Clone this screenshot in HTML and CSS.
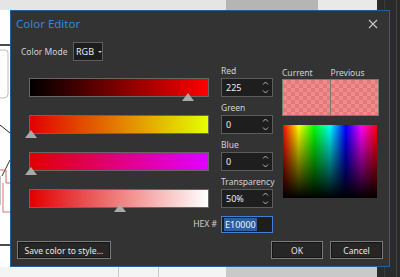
FILE: index.html
```html
<!DOCTYPE html>
<html lang="en">
<head>
    <meta charset="UTF-8">
    <title>Color Editor</title>
    <link rel="stylesheet" href="styles.css">
</head>
<body>

    <!-- Drawing behind the dialog -->
    <svg class="backdrop" width="400" height="277" viewBox="0 0 400 277">
        <rect x="0" y="0" width="400" height="277" fill="#f4f4f4"/>
        <rect x="0" y="0" width="226" height="10" fill="#e5e5e5"/>
        <rect x="226" y="0" width="92" height="10" fill="#b5b5b5"/>
        <rect x="318" y="0" width="59" height="10" fill="#e9e9e9"/>
        <rect x="0" y="10" width="10" height="257" fill="#ffffff"/>
        <path d="M0 45 H10" stroke="#111" stroke-width="1.5"/>
        <path d="M0 50 H5 Q8 50 8 53 V94 Q8 98 4 98 H0" fill="none" stroke="#bdbdbd"/>
        <path d="M0 125 L10 133" stroke="#222" stroke-width="1"/>
        <path d="M10 160 L2 176" stroke="#333" stroke-width="1"/>
        <path d="M0 170 H6 V183 H10" fill="none" stroke="#e06060"/>
        <path d="M3 183 V212 H10" fill="none" stroke="#e07070"/>
        <path d="M0 176 V205" fill="none" stroke="#888"/>
        <path d="M0 245 H10" stroke="#111" stroke-width="1.5"/>
        <rect x="226" y="267" width="151" height="10" fill="#c9c9c9"/>
        <path d="M118.5 267 V277 M158.5 267 V277" stroke="#c8c8c8"/>
        <rect x="377" y="0" width="23" height="277" fill="#2b2b2b"/>
        <path d="M384.5 0 V277" stroke="#3b3b3b"/>
        <path d="M396.5 0 V277" stroke="#444"/>
    </svg>

    <div class="dialog">
        <div class="titlebar">
            <span class="title">Color Editor</span>
            <svg class="close" width="10" height="10" viewBox="0 0 10 10">
                <path d="M1 1 L9 9 M9 1 L1 9" stroke="#c8c8c8" stroke-width="1.1"/>
            </svg>
        </div>

        <div class="mode-row">
            <span class="mode-label">Color Mode</span>
            <div class="select">RGB <span class="caret"></span></div>
        </div>

        <div class="editor">
            <div class="slider row1">
                <div class="bar bar-red"></div>
                <span class="thumb" style="left: 88%"></span>
            </div>
            <div class="slider row2">
                <div class="bar bar-green"></div>
                <span class="thumb" style="left: 0%"></span>
            </div>
            <div class="slider row3">
                <div class="bar bar-blue"></div>
                <span class="thumb" style="left: 0%"></span>
            </div>
            <div class="slider row4">
                <div class="bar bar-alpha"></div>
                <span class="thumb" style="left: 50%"></span>
            </div>

            <div class="field row1">
                <label>Red</label>
                <div class="spin">
                    <span>225</span>
                    <svg class="arrows" width="7" height="15" viewBox="0 0 7 15"><path d="M1 4.5 L3.5 2 L6 4.5 M1 10.5 L3.5 13 L6 10.5"/></svg>
                </div>
            </div>
            <div class="field row2">
                <label>Green</label>
                <div class="spin">
                    <span>0</span>
                    <svg class="arrows" width="7" height="15" viewBox="0 0 7 15"><path d="M1 4.5 L3.5 2 L6 4.5 M1 10.5 L3.5 13 L6 10.5"/></svg>
                </div>
            </div>
            <div class="field row3">
                <label>Blue</label>
                <div class="spin">
                    <span>0</span>
                    <svg class="arrows" width="7" height="15" viewBox="0 0 7 15"><path d="M1 4.5 L3.5 2 L6 4.5 M1 10.5 L3.5 13 L6 10.5"/></svg>
                </div>
            </div>
            <div class="field row4">
                <label>Transparency</label>
                <div class="spin">
                    <span>50%</span>
                    <svg class="arrows" width="7" height="15" viewBox="0 0 7 15"><path d="M1 4.5 L3.5 2 L6 4.5 M1 10.5 L3.5 13 L6 10.5"/></svg>
                </div>
            </div>

            <div class="hex-label">HEX #</div>
            <div class="hex-box"><span class="selected">E10000</span></div>

            <div class="preview">
                <div class="preview-labels">
                    <span>Current</span>
                    <span>Previous</span>
                </div>
                <div class="swatch">
                    <div class="half"></div>
                    <div class="half"></div>
                </div>
                <div class="spectrum"></div>
            </div>
        </div>

        <div class="footer">
            <button class="btn btn-save">Save color to style...</button>
            <div class="actions">
                <button class="btn btn-ok">OK</button>
                <button class="btn btn-cancel">Cancel</button>
            </div>
        </div>
    </div>

</body>
</html>
```

FILE: styles.css
```css
* {
    margin: 0;
    padding: 0;
    box-sizing: border-box;
}
body {
    width: 400px;
    height: 277px;
    overflow: hidden;
    position: relative;
    background: #f4f4f4;
    font-family: "Noto Sans", "Liberation Sans", sans-serif;
}
.backdrop {
    position: absolute;
    left: 0;
    top: 0;
}
.dialog {
    position: absolute;
    left: 10px;
    top: 10px;
    width: 380px;
    height: 257px;
    background: #333333;
    border: 1px solid #24609f;
    color: #d2d2d2;
    font-size: 8.5px;
}
.titlebar {
    display: flex;
    justify-content: space-between;
    align-items: center;
    height: 24px;
    padding: 0 11px 0 5px;
}
.title {
    color: #2f8ae0;
    font-size: 11.5px;
    line-height: 16px;
    padding-top: 2px;
}
.close {
    display: block;
    margin-top: 1px;
}
.mode-row {
    display: flex;
    align-items: center;
    height: 19px;
    margin-top: 7px;
    padding-left: 10px;
}
.mode-label {
    width: 52px;
}
.select {
    width: 30px;
    height: 19px;
    background: #1c1c1c;
    border: 1px solid #5e5e5e;
    color: #ececec;
    padding-left: 2px;
    line-height: 17px;
    display: flex;
    align-items: center;
    font-size: 9px;
}
.caret {
    width: 0;
    height: 0;
    margin-left: 4px;
    border-left: 2px solid transparent;
    border-right: 2px solid transparent;
    border-top: 2px solid #cfcfcf;
}

/* main grid: sliders | fields | preview */
.editor {
    display: grid;
    grid-template-columns: 192px 61px 97px;
    grid-template-rows: repeat(4, 37px) 24px;
    margin-top: 1px;
    padding-left: 18px;
}
.row1 { grid-row: 1; }
.row2 { grid-row: 2; }
.row3 { grid-row: 3; }
.row4 { grid-row: 4; }
.slider {
    grid-column: 1;
    position: relative;
    width: 180px;
    padding-top: 16px;
}
.bar {
    height: 19px;
    border: 1px solid #666;
}
.bar-red { background: linear-gradient(to right, #000000, #ff0000); }
.bar-green { background: linear-gradient(to right, #e10000, #e4ff00); }
.bar-blue { background: linear-gradient(to right, #e10000, #e100ff); }
.bar-alpha { background: linear-gradient(to right, #e10000, #ffffff); }
.thumb {
    position: absolute;
    top: 31px;
    width: 0;
    height: 0;
    margin-left: -5px;
    border-left: 6px solid transparent;
    border-right: 6px solid transparent;
    border-bottom: 8px solid #a9a9a9;
}
.slider .thumb[style="left: 0%"] {
    margin-left: -4px;
}
.field {
    grid-column: 2;
    width: 52px;
}
.field label {
    display: block;
    line-height: 16px;
    padding-top: 1px;
    height: 16px;
}
.spin {
    height: 19px;
    background: #1e1e1e;
    border: 1px solid #5c5c5c;
    color: #ededed;
    display: flex;
    justify-content: space-between;
    align-items: center;
    padding: 0 3px 0 4px;
    font-size: 9px;
}
.arrows {
    display: block;
    fill: none;
    stroke: #b8b8b8;
    stroke-width: 1;
}
.hex-label {
    grid-column: 1;
    grid-row: 5;
    text-align: right;
    padding-right: 4px;
    padding-top: 8px;
    color: #cfcfcf;
}
.hex-box {
    grid-column: 2;
    grid-row: 5;
    width: 52px;
    height: 17px;
    margin-top: 6px;
    background: #1e1e1e;
    border: 1px solid #3b82d6;
    padding: 1px 2px;
    font-size: 9px;
}
.selected {
    display: inline-block;
    background: #2d5e9e;
    color: #f2f2f2;
    line-height: 13px;
    padding: 0 1px;
}
.preview {
    grid-column: 3;
    grid-row: 1 / 5;
}
.preview-labels {
    display: flex;
    padding-top: 5px;
    height: 17px;
    line-height: 12px;
}
.preview-labels span {
    width: 49px;
}
.swatch {
    display: flex;
    height: 37px;
    border: 1px solid #7a7a7a;
}
.swatch .half {
    flex: 1;
    background: repeating-conic-gradient(#e27a7a 0 25%, #ef8c8c 0 50%) 0 0 / 8px 8px;
}
.swatch .half + .half {
    border-left: 1px solid #7a7a7a;
}
.spectrum {
    width: 94px;
    height: 73px;
    margin: 9px 0 0 1px;
    background:
        linear-gradient(to bottom, rgba(0, 0, 0, 0), #000000),
        linear-gradient(to right, #ff0000, #ffff00, #00ff00, #00ffff, #0000ff, #ff00ff, #ff0000);
}
.footer {
    display: flex;
    justify-content: space-between;
    margin-top: 7px;
    padding: 0 6px;
}
.actions {
    display: flex;
    gap: 7px;
}
.btn {
    height: 18px;
    background: #262626;
    border: 1px solid #7a7a7a;
    box-shadow: inset 0 0 0 1px #151515;
    color: #e6e6e6;
    font-family: "Noto Sans", "Liberation Sans", sans-serif;
    font-size: 8.5px;
}
.btn-save { width: 94px; }
.btn-ok { width: 52px; }
.btn-cancel { width: 53px; }
```
